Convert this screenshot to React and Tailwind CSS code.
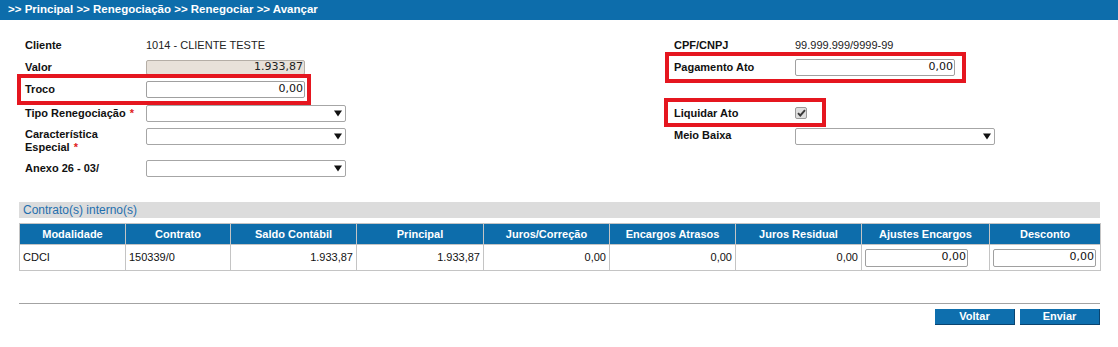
import React from "react";

function Arrow() {
  return (
    <svg width="8" height="7" viewBox="0 0 8 7" className="block">
      <path d="M0 0.5 L8 0.5 L4 6.5 Z" fill="#111" />
    </svg>
  );
}

function Select({ w }) {
  return (
    <div
      className={`${w} h-[17px] border border-[#a6a6a6] rounded-[2px] bg-white flex items-center justify-end pr-[3px]`}
    >
      <Arrow />
    </div>
  );
}

function Input({ w, h, value, readOnly }) {
  return (
    <div
      className={`${w} ${h} border rounded-[2px] flex items-center justify-end pr-[1px] font-['DejaVu_Sans',sans-serif] text-[11px] ${
        readOnly
          ? "bg-[#e8e1d9] border-[#b5aea6] text-[#222]"
          : "bg-white border-[#a0a0a0] text-[#111]"
      }`}
    >
      {value}
    </div>
  );
}

function Label({ children }) {
  return (
    <div className="w-[121px] shrink-0 font-bold text-[11px] text-[#111] leading-[13px]">
      {children}
    </div>
  );
}

function Star() {
  return <span className="text-[#e01b1b] ml-[4px]">*</span>;
}

function RedBox({ cls }) {
  return (
    <div
      className={`absolute border-[4px] border-[#e5161f] pointer-events-none ${cls}`}
    />
  );
}

export default function App() {
  const cols = [
    ["Modalidade", "w-[106px]"],
    ["Contrato", "w-[105px]"],
    ["Saldo Contábil", "w-[126px]"],
    ["Principal", "w-[127px]"],
    ["Juros/Correção", "w-[126px]"],
    ["Encargos Atrasos", "w-[126px]"],
    ["Juros Residual", "w-[126px]"],
    ["Ajustes Encargos", "w-[128px]"],
    ["Desconto", "w-[111px]"],
  ];
  return (
    <div className="w-[1118px] h-[347px] bg-white font-['Liberation_Sans',Arial,sans-serif] text-[11px] text-[#111] overflow-hidden">
      <div className="h-[20px] bg-[#0d6dab] text-white font-bold text-[11.5px] flex items-center pl-[8px]">
        &gt;&gt; Principal &gt;&gt; Renegociação &gt;&gt; Renegociar &gt;&gt; Avançar
      </div>

      <div className="pt-[15px] pl-[25px]">
        {/* Row 1 */}
        <div className="flex h-[21px] items-center">
          <div className="w-[649px] flex items-center">
            <Label>Cliente</Label>
            <div className="text-[#222]">1014 - CLIENTE TESTE</div>
          </div>
          <div className="flex items-center">
            <Label>CPF/CNPJ</Label>
            <div className="text-[#222]">99.999.999/9999-99</div>
          </div>
        </div>

        {/* Row 2 */}
        <div className="flex h-[22px] items-center">
          <div className="w-[649px] flex items-center">
            <Label>Valor</Label>
            <Input w="w-[159px]" h="h-[15px]" value="1.933,87" readOnly />
          </div>
          <div className="relative flex items-center">
            <RedBox cls="left-[-9px] top-[-7px] w-[301px] h-[31px]" />
            <Label>Pagamento Ato</Label>
            <Input w="w-[160px]" h="h-[17px]" value="0,00" />
          </div>
        </div>

        {/* Row 3 */}
        <div className="flex h-[23px] items-center">
          <div className="relative w-[649px] flex items-center">
            <RedBox cls="left-[-8px] top-[-7px] w-[294px] h-[31px]" />
            <Label>Troco</Label>
            <Input w="w-[159px]" h="h-[17px]" value="0,00" />
          </div>
        </div>

        {/* Row 4 */}
        <div className="flex h-[24px] items-center">
          <div className="w-[649px] flex items-center">
            <Label>
              Tipo Renegociação
              <Star />
            </Label>
            <Select w="w-[200px]" />
          </div>
          <div className="relative flex items-center">
            <RedBox cls="left-[-10px] top-[-9px] w-[162px] h-[29px]" />
            <Label>Liquidar Ato</Label>
            <div className="w-[12px] h-[12px] mt-[-1px] border border-[#9a9a9a] rounded-[2px] bg-[#dedede] flex items-center justify-center">
              <svg width="9" height="8" viewBox="0 0 9 8">
                <path
                  d="M1 4.2 L3.3 6.5 L8 1.2"
                  stroke="#3a3a3a"
                  strokeWidth="1.9"
                  fill="none"
                />
              </svg>
            </div>
          </div>
        </div>

        {/* Row 5 */}
        <div className="flex h-[32px] items-start">
          <div className="w-[649px] flex items-start">
            <div className="mt-[3px]">
              <Label>
                Característica
                <br />
                Especial
                <Star />
              </Label>
            </div>
            <div className="mt-[3px]">
              <Select w="w-[200px]" />
            </div>
          </div>
          <div className="flex items-start">
            <div className="mt-[4px]">
              <Label>Meio Baixa</Label>
            </div>
            <div className="mt-[3px]">
              <Select w="w-[200px]" />
            </div>
          </div>
        </div>

        {/* Row 6 */}
        <div className="flex h-[22px] items-center">
          <div className="w-[649px] flex items-center">
            <Label>Anexo 26 - 03/</Label>
            <Select w="w-[200px]" />
          </div>
        </div>
      </div>

      <div className="ml-[19px] w-[1081px] mt-[23px]">
        <div className="h-[16px] bg-[#dcdcdc] text-[#1f6fae] text-[12px] flex items-center pl-[4px]">
          Contrato(s) interno(s)
        </div>
        <table className="mt-[5px] w-[1081px] table-fixed border-collapse">
          <thead>
            <tr>
              {cols.map(([c, w]) => (
                <th
                  key={c}
                  className={`${w} h-[21px] p-0 bg-[#0d6dab] text-white font-bold text-[11px] text-center border border-[#c4c4c4]`}
                >
                  {c}
                </th>
              ))}
            </tr>
          </thead>
          <tbody>
            <tr className="text-[11px] text-[#111]">
              <td className="h-[26px] px-[3px] border border-[#c4c4c4]">CDCI</td>
              <td className="px-[3px] border border-[#c4c4c4]">150339/0</td>
              <td className="px-[3px] text-right border border-[#c4c4c4]">1.933,87</td>
              <td className="px-[3px] text-right border border-[#c4c4c4]">1.933,87</td>
              <td className="px-[3px] text-right border border-[#c4c4c4]">0,00</td>
              <td className="px-[3px] text-right border border-[#c4c4c4]">0,00</td>
              <td className="px-[3px] text-right border border-[#c4c4c4]">0,00</td>
              <td className="px-[3px] border border-[#c4c4c4]">
                <Input w="w-[103px]" h="h-[18px]" value="0,00" />
              </td>
              <td className="px-[3px] border border-[#c4c4c4]">
                <Input w="w-[103px]" h="h-[18px]" value="0,00" />
              </td>
            </tr>
          </tbody>
        </table>

        <div className="mt-[32px] border-t border-[#a3a3a3]" />
        <div className="flex justify-end gap-[5px] mt-[5px]">
          <div className="w-[80px] h-[16px] bg-[#0e6fae] border-r border-b border-[#0a4470] text-white font-bold text-[11px] flex items-center justify-center">
            Voltar
          </div>
          <div className="w-[80px] h-[16px] bg-[#0e6fae] border-r border-b border-[#0a4470] text-white font-bold text-[11px] flex items-center justify-center">
            Enviar
          </div>
        </div>
      </div>
    </div>
  );
}
